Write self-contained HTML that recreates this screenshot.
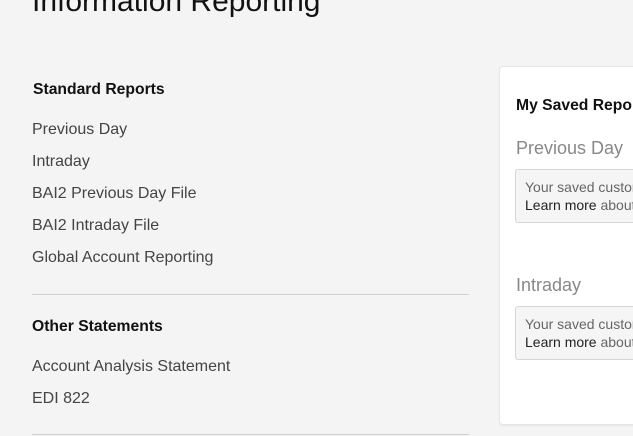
<!DOCTYPE html>
<html><head><meta charset="utf-8"><style>
*{margin:0;padding:0;box-sizing:border-box}
html,body{width:633px;height:436px;overflow:hidden;background:#f4f4f4;font-family:"Liberation Sans",Arial,sans-serif;position:relative}
.a{position:absolute;white-space:nowrap}
h1{position:absolute;left:32px;top:-15px;font-size:30px;font-weight:normal;color:#111;white-space:nowrap}
.h{font-size:15.7px;font-weight:bold;color:#111}
.l{font-size:16px;color:#444}
.hr{position:absolute;left:32px;width:437px;height:1px;background:#d0d0d0}
.wrap{position:absolute;left:499px;top:0;width:134px;height:436px;overflow:hidden}
.card{position:absolute;left:0;top:66px;width:140px;height:359px;background:#fff;border:1px solid #e6e6e6;border-radius:4px;box-shadow:0 1px 2px rgba(0,0,0,.06)}
.g{font-size:18px;color:#888}
.box{position:absolute;left:16px;width:130px;height:54px;background:#f5f5f5;border:1px solid #d6d6d6;border-radius:3px;font-size:14px;color:#666;padding:8px 0 0 9px;line-height:18px;white-space:nowrap;overflow:hidden}
.box b{font-weight:normal;color:#222}
</style></head><body>
<h1>Information Reporting</h1>
<div class="a h" style="left:33px;top:81px">Standard Reports</div>
<div class="a l" style="left:32px;top:121px">Previous Day</div>
<div class="a l" style="left:32px;top:153px">Intraday</div>
<div class="a l" style="left:32px;top:185px">BAI2 Previous Day File</div>
<div class="a l" style="left:32px;top:217px">BAI2 Intraday File</div>
<div class="a l" style="left:32px;top:249px">Global Account Reporting</div>
<div class="hr" style="top:294px"></div>
<div class="a h" style="left:32px;top:318px">Other Statements</div>
<div class="a l" style="left:32px;top:358px">Account Analysis Statement</div>
<div class="a l" style="left:32px;top:390px">EDI 822</div>
<div class="hr" style="top:434px"></div>
<div class="wrap">
<div class="card"></div>
<div class="a h" style="left:17px;top:97px">My Saved Reports</div>
<div class="a g" style="left:17px;top:138px">Previous Day</div>
<div class="box" style="top:169px">Your saved custom reports<br><b>Learn more</b> about</div>
<div class="a g" style="left:17px;top:275px">Intraday</div>
<div class="box" style="top:306px">Your saved custom reports<br><b>Learn more</b> about</div>
</div>
</body></html>
